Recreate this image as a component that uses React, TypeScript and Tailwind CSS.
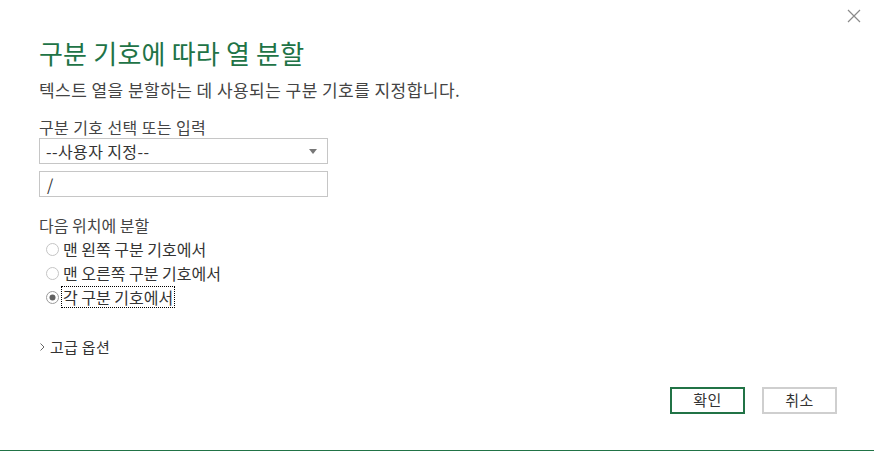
import React from "react";

const font = { fontFamily: '"Noto Sans CJK KR", "Noto Sans", sans-serif' };

function Radio({ checked }: { checked?: boolean }) {
  return (
    <svg width="13" height="13" viewBox="0 0 13 13" className="shrink-0">
      <circle cx="6.5" cy="6.5" r="6" fill="#fff" stroke={checked ? "#9a9a9a" : "#c4c4c4"} strokeWidth="1" />
      {checked && <circle cx="6.5" cy="6.5" r="3" fill="#606060" />}
    </svg>
  );
}

export default function App() {
  const options = ["맨 왼쪽 구분 기호에서", "맨 오른쪽 구분 기호에서", "각 구분 기호에서"];

  return (
    <div className="relative w-[874px] h-[452px] bg-white overflow-hidden" style={font}>
      {/* close */}
      <button className="absolute left-[847px] top-[9px] w-[14px] h-[14px]">
        <svg width="14" height="14" viewBox="0 0 14 14">
          <path d="M1 1 L13 13 M13 1 L1 13" stroke="#8a8a8a" strokeWidth="1.2" />
        </svg>
      </button>

      <div className="flex flex-col pl-[39px] pt-[37px] text-[#444]">
        <h1 className="text-[26px] leading-[32px] tracking-[0.2px] text-[#217346] font-normal">구분 기호에 따라 열 분할</h1>
        <p className="mt-[10px] text-[17px] leading-[22px] tracking-[0.45px] text-[#444]">
          텍스트 열을 분할하는 데 사용되는 구분 기호를 지정합니다.
        </p>

        <div className="mt-[16px] text-[16px] leading-[20px] tracking-[0.4px]">구분 기호 선택 또는 입력</div>
        <div className="mt-[1px] w-[289px] h-[26px] border border-[#c6c6c6] bg-white flex items-center justify-between pl-[6px] pr-[10px]">
          <span className="text-[16px] tracking-[0.4px] text-[#333]">--사용자 지정--</span>
          <svg width="8" height="5" viewBox="0 0 8 5">
            <path d="M0 0 L8 0 L4 5 Z" fill="#777" />
          </svg>
        </div>
        <div className="mt-[7px] w-[289px] h-[26px] border border-[#c6c6c6] bg-white flex items-center pl-[7px]">
          <span className="text-[16px] text-[#333]">/</span>
        </div>

        <div className="mt-[18px] text-[16px] leading-[20px]">다음 위치에 분할</div>
        <div className="mt-[2px] flex flex-col">
          {options.map((o, i) => (
            <div key={o} className="h-[24px] flex items-center pl-[7px] gap-[2px]">
              <Radio checked={i === 2} />
              <span
                className={
                  "text-[16px] leading-[20px] text-[#333] px-[1px] " +
                  (i === 2 ? "border border-dotted border-black" : "border border-transparent")
                }
              >
                {o}
              </span>
            </div>
          ))}
        </div>

        <div className="mt-[28px] flex items-center gap-[4px] h-[20px]">
          <svg width="7" height="10" viewBox="0 0 7 10">
            <path d="M1.5 1.5 L5 5 L1.5 8.5" stroke="#666" strokeWidth="1" fill="none" />
          </svg>
          <span className="text-[15px] leading-[20px] tracking-[0.3px] text-[#333]">고급 옵션</span>
        </div>

        <div className="mt-[30px] flex justify-end gap-[17px] pr-[37px]">
          <button className="w-[75px] h-[27px] border-2 border-[#217346] bg-white text-[15px] tracking-[0.5px] text-[#333]">확인</button>
          <button className="w-[75px] h-[27px] border-2 border-[#cfcfcf] bg-white text-[15px] tracking-[0.5px] text-[#333]">취소</button>
        </div>
      </div>

      <div className="absolute left-0 right-0 top-[450px] h-[1px] bg-[#217346]" />
    </div>
  );
}
